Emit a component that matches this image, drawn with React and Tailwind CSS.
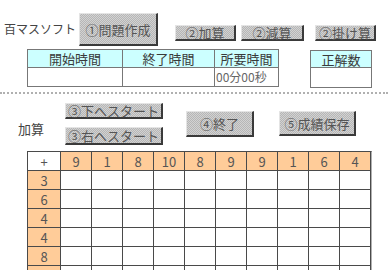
import React from "react";

function Btn({ className = "", children }) {
  return (
    <div
      className={
        "flex items-center justify-center whitespace-nowrap bg-[#c4c4c4] bg-[repeating-conic-gradient(#b6b6b6_0_25%,#d2d2d2_0_50%)] bg-[length:2px_2px] border-t border-l border-t-[#e4e4e4] border-l-[#e4e4e4] border-r-2 border-b-2 border-r-[#3a3a3a] border-b-[#3a3a3a] text-[#555] text-[13px] leading-none " +
        className
      }
    >
      {children}
    </div>
  );
}

const headers = [9, 1, 8, 10, 8, 9, 9, 1, 6, 4];
const rowsVals = [3, 6, 4, 4, 8, ""];

export default function App() {
  return (
    <div className="w-[390px] h-[270px] overflow-hidden bg-white text-[13px] text-[#3a3a3a] font-['Noto_Sans_CJK_JP','Noto_Sans',sans-serif]">
      {/* top section */}
      <div className="h-[92px] pt-[13px]">
        <div className="flex items-start h-[33px]">
          <div className="w-[79px] pl-[4px] mt-[8px] leading-[16px] text-[12px] whitespace-nowrap text-[#444]">百マスソフト</div>
          <Btn className="w-[79px] h-[33px]">①問題作成</Btn>
          <Btn className="ml-[17px] mt-[12px] w-[61px] h-[16px]">②加算</Btn>
          <Btn className="ml-[5px] mt-[12px] w-[63px] h-[16px]">②減算</Btn>
          <Btn className="ml-[11px] mt-[12px] w-[61px] h-[16px]">②掛け算</Btn>
        </div>
        <div className="flex items-start mt-[3px]">
          <div className="ml-[27px] grid grid-cols-[95px_92px_64px] border-l border-t border-[#777] leading-none">
            <div className="h-[18px] bg-[#ccffff] border-r border-b border-[#777] flex items-center justify-center">開始時間</div>
            <div className="h-[18px] bg-[#ccffff] border-r border-b border-[#777] flex items-center justify-center">終了時間</div>
            <div className="h-[18px] bg-[#ccffff] border-r border-b border-[#777] flex items-center justify-center">所要時間</div>
            <div className="h-[19px] border-r border-b border-[#777]"></div>
            <div className="h-[19px] border-r border-b border-[#777]"></div>
            <div className="h-[19px] border-r border-b border-[#777] flex items-center pl-[1px] text-[12px] text-[#666]">00分00秒</div>
          </div>
          <div className="ml-[31px] mt-[1px] w-[62px] border-l border-t border-[#777] leading-none">
            <div className="h-[17px] bg-[#ccffff] border-r border-b border-[#777] flex items-center justify-center">正解数</div>
            <div className="h-[20px] border-r border-b border-[#777]"></div>
          </div>
        </div>
      </div>

      {/* divider */}
      <div className="w-[388px] border-t-2 border-dotted border-[#b0b0b0]"></div>

      {/* second section */}
      <div className="pt-[9px]">
        <div className="flex items-start">
          <div className="ml-[18px] w-[47px] mt-[18px] leading-[16px] text-[#444]">加算</div>
          <div className="flex flex-col w-[98px]">
            <Btn className="h-[16px]">③下へスタート</Btn>
            <Btn className="mt-[8px] h-[18px]">③右へスタート</Btn>
          </div>
          <Btn className="ml-[23px] mt-[8px] w-[68px] h-[26px]">④終了</Btn>
          <Btn className="ml-[25px] mt-[8px] w-[77px] h-[25px]">⑤成績保存</Btn>
        </div>

        <div className="mt-[6px] ml-[27px] w-[345px] border-l border-t border-[#4a4a4a] border-r border-r-[#b0b0b0]">
          <div className="grid grid-cols-[33px_repeat(10,31px)] leading-none">
            <div className="h-[19px] bg-white border-r border-b border-[#4a4a4a] flex items-center justify-center text-[#555]">+</div>
            {headers.map((h, i) => (
              <div key={"h" + i} className="h-[19px] bg-[#ffcc99] border-r border-b border-[#4a4a4a] flex items-center justify-center text-[#555]">
                {h}
              </div>
            ))}
            {rowsVals.map((v, r) => (
              <React.Fragment key={"r" + r}>
                <div className="h-[19px] bg-[#ffcc99] border-r border-b border-[#4a4a4a] flex items-center justify-center text-[#555]">{v}</div>
                {headers.map((_, c) => (
                  <div key={"c" + r + "-" + c} className="h-[19px] bg-white border-r border-b border-[#4a4a4a]"></div>
                ))}
              </React.Fragment>
            ))}
          </div>
        </div>
      </div>
    </div>
  );
}
